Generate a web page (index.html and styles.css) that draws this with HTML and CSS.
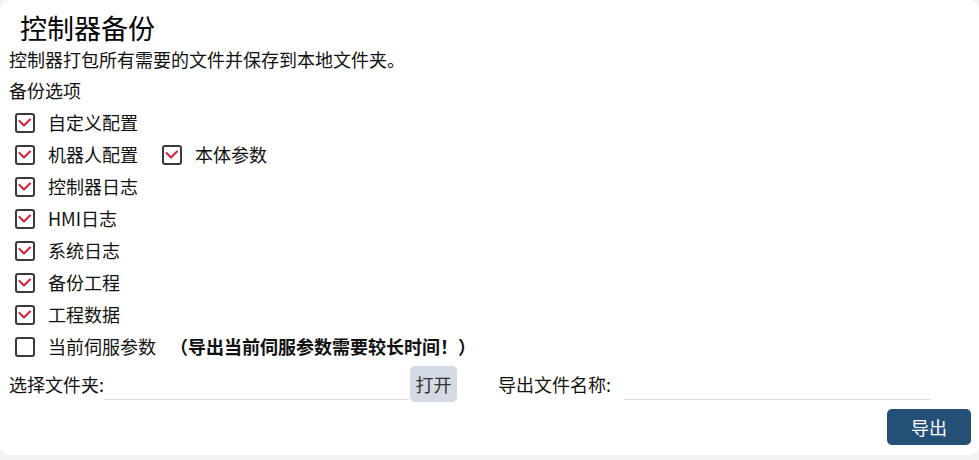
FILE: index.html
```html
<!DOCTYPE html>
<html lang="zh-CN">
<head>
    <meta charset="UTF-8">
    <meta name="viewport" content="width=device-width, initial-scale=1.0">
    <title>控制器备份</title>
    <link rel="stylesheet" href="styles.css">
</head>
<body>
    <div class="panel">
        <div class="title">控制器备份</div>
        <div class="desc">控制器打包所有需要的文件并保存到本地文件夹。</div>
        <div class="section">备份选项</div>

        <div class="options">
            <div class="row">
                <label class="check"><span class="box"><svg viewBox="0 0 16 16"><polyline points="2.5,6 7,10.5 13,4.5"/></svg></span>自定义配置</label>
            </div>
            <div class="row">
                <label class="check"><span class="box"><svg viewBox="0 0 16 16"><polyline points="2.5,6 7,10.5 13,4.5"/></svg></span>机器人配置</label>
                <label class="check"><span class="box"><svg viewBox="0 0 16 16"><polyline points="2.5,6 7,10.5 13,4.5"/></svg></span>本体参数</label>
            </div>
            <div class="row">
                <label class="check"><span class="box"><svg viewBox="0 0 16 16"><polyline points="2.5,6 7,10.5 13,4.5"/></svg></span>控制器日志</label>
            </div>
            <div class="row">
                <label class="check"><span class="box"><svg viewBox="0 0 16 16"><polyline points="2.5,6 7,10.5 13,4.5"/></svg></span>HMI日志</label>
            </div>
            <div class="row">
                <label class="check"><span class="box"><svg viewBox="0 0 16 16"><polyline points="2.5,6 7,10.5 13,4.5"/></svg></span>系统日志</label>
            </div>
            <div class="row">
                <label class="check"><span class="box"><svg viewBox="0 0 16 16"><polyline points="2.5,6 7,10.5 13,4.5"/></svg></span>备份工程</label>
            </div>
            <div class="row">
                <label class="check"><span class="box"><svg viewBox="0 0 16 16"><polyline points="2.5,6 7,10.5 13,4.5"/></svg></span>工程数据</label>
            </div>
            <div class="row">
                <label class="check"><span class="box"></span>当前伺服参数</label>
                <span class="note">（导出当前伺服参数需要较长时间！）</span>
            </div>
        </div>

        <div class="paths">
            <span class="field-label">选择文件夹:</span>
            <input class="field folder" type="text">
            <button class="btn-open">打开</button>
            <span class="field-label name-label">导出文件名称:</span>
            <input class="field" type="text">
        </div>

        <div class="actions">
            <button class="btn-export">导出</button>
        </div>
    </div>
</body>
</html>
```

FILE: styles.css
```css
* {
    margin: 0;
    padding: 0;
    box-sizing: border-box;
}

body {
    background-color: #f3f3f3;
    font-family: "Noto Sans CJK SC", "Noto Sans", sans-serif;
    font-size: 18px;
    color: #111;
}

.panel {
    width: 979px;
    height: 455px;
    background: #fff;
    border-radius: 10px;
    padding: 8px 8px 10px 9px;
}

.title {
    height: 40px;
    line-height: 40px;
    font-size: 27px;
    padding-left: 11px;
    color: #000;
}

.desc {
    line-height: 22px;
}

.section {
    margin-top: 4px;
    line-height: 32px;
}

.row {
    display: flex;
    align-items: center;
    height: 32px;
    padding-left: 6px;
}

.check {
    display: flex;
    align-items: center;
    gap: 13px;
    margin-right: 24px;
}

.box {
    width: 20px;
    height: 20px;
    border: 2px solid #3a3a3a;
    border-radius: 3px;
    display: flex;
    margin-top: 2px;
}

.box svg {
    width: 16px;
    height: 16px;
    fill: none;
    stroke: #d21f34;
    stroke-width: 2;
    stroke-linecap: round;
    stroke-linejoin: round;
}

.note {
    font-weight: 700;
    margin-left: -10px;
}

.paths {
    display: flex;
    align-items: center;
    height: 36px;
    margin-top: 4px;
}

.field-label {
    white-space: nowrap;
}

.name-label {
    margin-left: 41px;
    margin-right: 13px;
}

.field {
    align-self: flex-start;
    width: 307px;
    height: 34px;
    border: none;
    border-bottom: 1px solid #e0e0e0;
    outline: none;
    font: inherit;
}

.folder {
    width: 306px;
}

.btn-open {
    width: 47px;
    height: 36px;
    border: none;
    border-radius: 5px;
    background: #d3dae4;
    color: #333;
    font: inherit;
}

.actions {
    display: flex;
    justify-content: flex-end;
    margin-top: 7px;
}

.btn-export {
    width: 84px;
    height: 36px;
    border: none;
    border-radius: 5px;
    background: #245078;
    color: #fff;
    font: inherit;
}
```
